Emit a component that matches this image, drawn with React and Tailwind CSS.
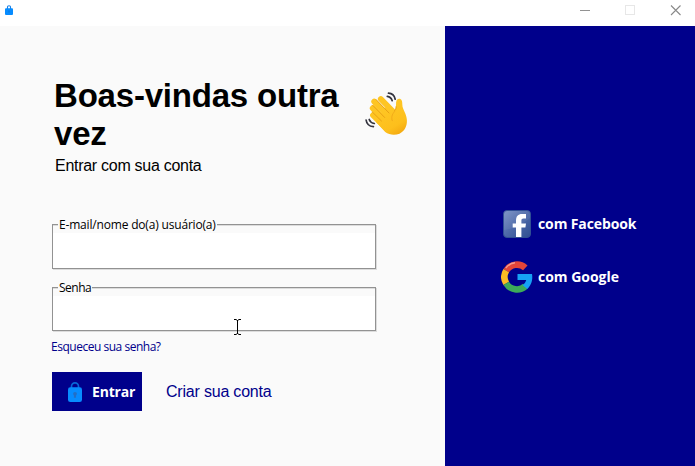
import React from "react";

function Lock({ className }) {
  return (
    <svg className={className} viewBox="0 0 16 22" fill="none">
      <path d="M4.500 8V5.300a3.500 3.500 0 0 1 7 0V8" stroke="#0767d8" strokeWidth="1.700" />
      <rect x="1" y="6.300" width="14" height="14.700" rx="2.300" fill="#078cff" />
      <circle cx="8" cy="12.800" r="1.900" fill="#246fc6" />
      <path d="M7.200 13h1.600l.3 3.800H6.900z" fill="#246fc6" />
    </svg>
  );
}

function TitleLock() {
  return (
    <svg className="h-[11px] w-[9px]" viewBox="0 0 9 11" fill="none">
      <path d="M2.500 4V1.800Q2.500.7 4 .7T5.500 1.800V4" stroke="#167fe6" strokeWidth="1.100" />
      <rect x="0" y="3.300" width="8" height="6.700" rx="1" fill="#078cff" />
      <path d="M3.500 5.500h1v2h-1z" fill="#0876dd" />
    </svg>
  );
}

function WavingHand() {
  return (
    <svg className="h-[46px] w-[46px]" viewBox="0 0 46 46" fill="none">
      <defs>
        <linearGradient id="skin" x1="12" y1="7" x2="34" y2="44" gradientUnits="userSpaceOnUse">
          <stop stopColor="#ffca28" />
          <stop offset=".75" stopColor="#fdbf1c" />
          <stop offset="1" stopColor="#f3a70f" />
        </linearGradient>
      </defs>
      <g stroke="#fec523" strokeWidth="5.800" strokeLinecap="round">
        <path d="M15.800 7 28 19.500" />
        <path d="M9.200 9.600 25 25.500" />
        <path d="M7.700 16.200 23 31" />
        <path d="M8 23.200 22 37" />
      </g>
      <path
        d="M20 15 29.200 18.800C30.700 17.500 31 15.500 31 12.800 30.900 9 31.800 6.800 34 6.800c2.800 0 3.400 2.700 3.300 5.500 0 3.500 1.500 5.700 3 9.200 2.400 5.800 2.300 12-1.200 16.400-4.300 5.500-12.700 6.600-18.900 2.100L11 30z"
        fill="url(#skin)"
      />
      <path
        d="m11 7.500 13 13.500M7.600 13.200l12.100 12.300M7.100 19.800 16.500 29M29.200 19.200c1.500-1.100 2-2.500 1.900-4.500"
        stroke="#e59d13"
        strokeWidth=".9"
        strokeLinecap="round"
      />
      <path d="M29.700 19.500c-2.800 2.900-3.600 6.200-2.300 9.600" stroke="#efa719" strokeWidth=".9" />
      <path
        d="M23.500 1.200c3.500.2 5.900 2.400 6.700 6M22.300 4.300c2.600.3 4.200 1.900 4.900 4.400M1.100 28c.5 3.800 3.200 6.300 7.300 6.700M4.200 27.500c.8 2.200 2.600 3.600 5.100 4"
        stroke="#34343f"
        strokeWidth="1.700"
        strokeLinecap="round"
      />
    </svg>
  );
}

function Facebook() {
  return (
    <svg className="h-7 w-7" viewBox="0 0 28 28">
      <defs>
        <linearGradient id="facebook" x1="0" y1="0" x2="1" y2="1">
          <stop stopColor="#7890c4" />
          <stop offset=".5" stopColor="#4d69a8" />
          <stop offset="1" stopColor="#2f4e91" />
        </linearGradient>
      </defs>
      <rect x=".5" y=".5" width="27" height="27" rx="3.500" fill="url(#facebook)" stroke="#304f93" />
      <path d="M13 27V17.500H9.700v-4H13v-3C13 6.200 15 4 19 4h4v4.400h-2.500c-1.600 0-2.100.7-2.100 2.100v3H23l-.6 4h-4V27z" fill="white" />
      <path d="M1 1h26v7Q16 18 1 20z" fill="white" opacity=".06" />
    </svg>
  );
}

function Google() {
  return (
    <svg className="-ml-px h-8 w-8" viewBox="0 0 32 32" fill="none">
      <path d="M5.200 9.600A12.500 12.500 0 0 1 24.300 6.900" stroke="#e2453a" strokeWidth="6.600" />
      <path d="M5.200 9.600A12.500 12.500 0 0 0 5.200 22.400" stroke="#fbbc23" strokeWidth="6.600" />
      <path d="M5.200 22.400A12.500 12.500 0 0 0 24.300 25.200" stroke="#3dab59" strokeWidth="6.600" />
      <path d="M16.500 13H31c1 5.500-.6 11.400-4.700 14.900l-4.900-3.800c2-1.300 3.300-3 3.800-5.200h-8.700z" fill="#16a1f5" />
      <path d="M4.800 7.200C7.300 3.600 10 2 14 1.700" stroke="#f49a8d" strokeWidth="1.400" />
    </svg>
  );
}

const uiFont = "font-['Open_Sans','Noto_Sans',sans-serif]";

function Field({ label, type, height, labelWidth, tracking }) {
  return (
    <label className={`relative block w-[324px] border border-[#929292] pt-2 shadow-[1px_1px_0_#dcdcdc,inset_0_1px_0_#dcdcdc] ${height}`}>
      <span className={`absolute -top-[9px] left-[5px] h-[17px] whitespace-nowrap bg-[#fafafa] pl-px text-[12px] leading-[17px] text-black ${labelWidth} ${tracking} ${uiFont}`}>
        {label}
      </span>
      <input type={type} className="block h-full w-full bg-white px-2 text-sm outline-none" />
    </label>
  );
}

export default function App() {
  return (
    <div className="relative flex h-[466px] w-[695px] flex-col overflow-hidden bg-[#fafafa] font-['Liberation_Sans',Arial,sans-serif] text-black">
      <header className="flex h-[26px] shrink-0 items-start justify-between bg-white pl-[5px] pr-[13px] pt-[5px]">
        <TitleLock />
        <div className="flex">
          <svg className="h-3 w-[103px]" viewBox="0 0 103 12" fill="none">
            <path d="M1 5.500h10" stroke="#929292" />
            <rect x="46.500" y=".5" width="9" height="9" stroke="#e7e7e7" />
            <path d="m92 .5 9.500 9.500m0-9.500L92 10" stroke="#898989" strokeWidth="1.100" />
          </svg>
        </div>
      </header>
      <div className="flex min-h-0 flex-1">
        <main className="flex w-[445px] shrink-0 flex-col pl-[52px]">
          <div className="flex h-[126px] pt-[51px]">
            <h1 className="w-[313px] pl-[2px] text-[33px] font-bold leading-[38px] tracking-[-0.2px]">
              Boas-vindas outra<br />vez
            </h1>
            <div className="pt-[15px]"><WavingHand /></div>
          </div>
          <p className="h-[72px] pl-[3px] text-[16px] leading-[27px] tracking-[-0.28px]">Entrar com sua conta</p>
          <Field label="E-mail/nome do(a) usuário(a)" type="text" height="h-[45px]" labelWidth="w-[159px]" tracking="tracking-[-0.18px]" />
          <div className="mt-[18px]">
            <Field label="Senha" type="password" height="h-[44px]" labelWidth="w-[34px]" tracking="tracking-[-0.5px]" />
          </div>
          <a href="#" className={`-ml-px mt-[7px] h-[34px] self-start text-[12px] leading-[17px] tracking-[-0.48px] text-[#00008b] ${uiFont}`}>
            Esqueceu sua senha?
          </a>
          <div className="flex items-center">
            <button className="flex h-[39px] w-[90px] items-center bg-[#00008b] pl-[15px] text-white">
              <Lock className="h-[22px] w-4" />
              <span className={`ml-[9px] text-[14px] font-bold leading-[18px] tracking-[-0.2px] ${uiFont}`}>Entrar</span>
            </button>
            <a href="#" className="ml-6 text-[16px] leading-6 tracking-[-0.2px] text-[#00008b]">Criar sua conta</a>
          </div>
        </main>
        <aside className="flex flex-1 flex-col bg-[#00008b] pl-[57px] pt-[184px] text-white">
          <button className="flex h-7 items-center pl-px text-left">
            <Facebook />
            <span className={`ml-[7px] text-[14px] font-bold leading-5 tracking-[-0.12px] ${uiFont}`}>com Facebook</span>
          </button>
          <button className="mt-[23px] flex h-8 items-center text-left">
            <Google />
            <span className={`ml-[5px] text-[14px] font-bold leading-5 tracking-[-0.02px] ${uiFont}`}>com Google</span>
          </button>
        </aside>
      </div>
      <svg className="absolute left-[233px] top-[319px] h-4 w-[9px]" viewBox="0 0 9 16" fill="none">
        <path d="M1 .5h2l1.500 1 1.500-1h2M4.500 1v14M1 15.500h2l1.500-1 1.500 1h2" stroke="black" />
      </svg>
    </div>
  );
}
